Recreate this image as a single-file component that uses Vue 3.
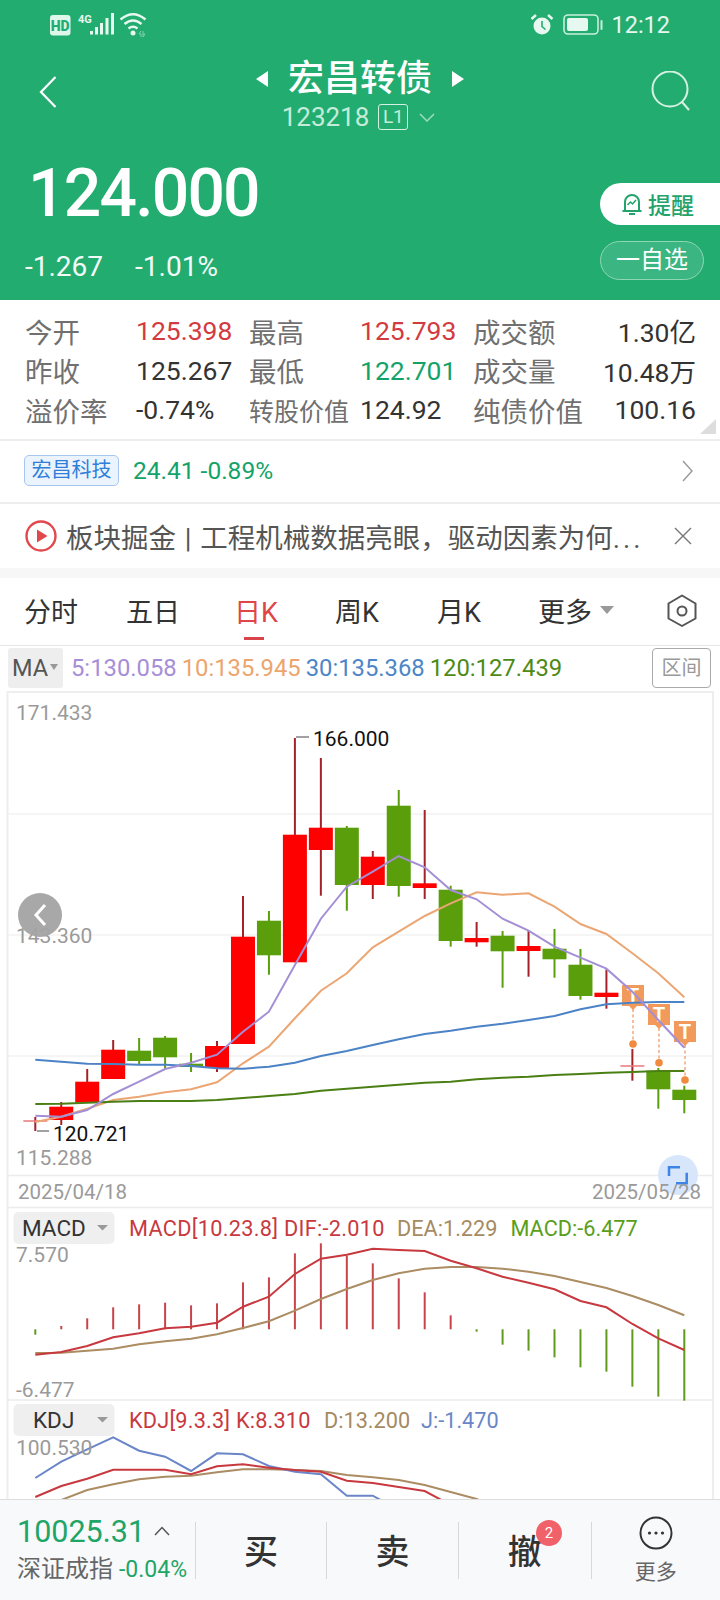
<script setup>
const colX = (i) => 35.3 + i * 25.96
const upper = (v) => 690 + v / 3
const lower = (v) => 1190 + v / 3
const toPoints = (list) => list.map((y, i) => `${colX(i).toFixed(1)},${y.toFixed(1)}`).join(' ')

const quotes = [
  [['今开'], ['125.398', 'red'], ['最高'], ['125.793', 'red'], ['成交额'], ['1.30亿', 'end']],
  [['昨收'], ['125.267'], ['最低'], ['122.701', 'green'], ['成交量'], ['10.48万', 'end']],
  [['溢价率'], ['-0.74%'], ['转股价值', 'tight'], ['124.92'], ['纯债价值'], ['100.16', 'end']],
]

const tabs = ['分时', '五日', '日K', '周K', '月K']

// open/close box, then wick top and bottom, all in page pixels
const candles = [
  [1120, 1122, 1117, 1131, 'doji'],
  [1106.7, 1120, 1102, 1125, 'up'],
  [1081.7, 1102.7, 1069, 1102.7, 'up'],
  [1049.7, 1079, 1040, 1079, 'up'],
  [1050.7, 1061, 1038, 1064, 'down'],
  [1037.7, 1057.3, 1036, 1069, 'down'],
  [1063.7, 1067, 1053, 1072, 'down'],
  [1046, 1068, 1041, 1072, 'up'],
  [936.7, 1044, 896, 1044, 'up'],
  [920.7, 955.3, 911, 974.7, 'down'],
  [834.7, 962.3, 738, 962.3, 'up'],
  [827.7, 850, 758, 895.7, 'up'],
  [827.7, 885, 826, 910.7, 'down'],
  [856.7, 885, 851, 899, 'up'],
  [805.7, 886, 790, 896.7, 'down'],
  [883.3, 888, 810, 899, 'up'],
  [889.7, 941, 885.7, 946.7, 'down'],
  [938, 942.3, 922, 946.7, 'up'],
  [935.7, 951.3, 931, 987.7, 'down'],
  [946, 951, 930.7, 976.7, 'up'],
  [948.7, 959.3, 929, 977.7, 'down'],
  [964.7, 996, 949, 999.7, 'down'],
  [992.7, 997, 969.3, 1008.7, 'up'],
  [1065, 1066.5, 1049, 1080.7, 'doji'],
  [1070.7, 1089.3, 1068, 1108.7, 'down'],
  [1089.7, 1100, 1085.7, 1113.3, 'down'],
].map(([top, bottom, high, low, kind], i) => ({ x: colX(i), top, bottom, high, low, kind }))

const maLines = [
  { color: '#eba673', points: [1296, 1280, 1256, 1230, 1220, 1207, 1198, 1177, 1120, 1070, 985, 902, 850, 772, 725, 678, 640, 607, 614, 610, 650, 702, 732, 790, 850, 922] },
  { color: '#4b83c6', points: [1109, 1115, 1121, 1122, 1124, 1124, 1128, 1135, 1136, 1130, 1118, 1098, 1083, 1065, 1048, 1032, 1022, 1010, 1001, 990, 978, 958, 943, 938, 936, 936] },
  { color: '#4a7f14', points: [1242, 1241, 1238, 1235, 1233, 1233, 1233, 1230, 1224, 1218, 1212, 1202, 1196, 1190, 1184, 1178, 1175, 1168, 1163, 1160, 1155, 1152, 1148, 1146, 1143, 1143] },
  { color: '#a48fd6', points: [1277, 1280, 1260, 1212, 1175, 1137, 1118, 1094, 1025, 965, 825, 686, 590, 545, 498, 532, 600, 628, 686, 722, 770, 803, 836, 905, 990, 1073] },
].map((line) => ({ color: line.color, points: toPoints(line.points.map(upper)) }))

const trades = [
  { x: 633, y: 985, dot: 1044 },
  { x: 659, y: 1004, dot: 1062.7 },
  { x: 685, y: 1021, dot: 1080 },
]

const macdBase = 1329.3
const macdBars = [
  [434, 'down'], [408, 'up'], [385, 'up'], [352, 'up'], [343, 'up'], [338, 'up'], [346, 'up'], [340, 'up'],
  [277, 'up'], [262, 'up'], [190, 'up'], [160, 'up'], [197, 'up'], [220, 'up'], [265, 'up'], [307, 'up'],
  [376, 'up'], [425, 'down'], [464, 'down'], [482, 'down'], [502, 'down'], [532, 'down'], [545, 'down'],
  [590, 'down'], [620, 'down'], [632, 'down'],
].map(([end, kind], i) => ({ x: colX(i), end: lower(end), kind }))

const dif = toPoints([494, 486, 468, 442, 430, 415, 410, 398, 350, 320, 252, 206, 194, 176, 180, 183, 212, 235, 260, 278, 298, 333, 352, 402, 445, 480].map(lower))
const dea = toPoints([489, 488, 482, 476, 463, 454, 446, 433, 414, 394, 362, 327, 297, 270, 250, 236, 231, 231, 236, 245, 258, 276, 294, 318, 345, 376].map(lower))

const kdjJ = toPoints([864, 815, 778, 742, 782, 800, 843, 790, 793, 828, 845, 853, 917, 917, 960, 1000].map(lower))
const kdjK = toPoints([921, 888, 866, 839, 839, 839, 853, 829, 823, 833, 840, 845, 872, 879, 891, 903, 945].map(lower))
const kdjD = toPoints([1000, 930, 900, 883, 868, 860, 857, 847, 838, 838, 840, 843, 855, 862, 870, 885, 906, 927, 960].map(lower))
</script>

<template>
  <div class="page">
    <header class="hero">
      <div class="status">
        <svg class="status-left" width="100" height="30" viewBox="0 0 100 30">
          <rect x="0" y="5" width="20.500" height="20.500" rx="3" fill="#dff6ea" />
          <text x="10.200" y="20.500" text-anchor="middle" class="hd">HD</text>
          <text x="28" y="13" class="net">4G</text>
          <rect x="40" y="21" width="3" height="3.500" fill="#e6f8ef" />
          <rect x="45" y="17" width="3" height="7.500" fill="#e6f8ef" />
          <rect x="50" y="13" width="3" height="11.500" fill="#e6f8ef" />
          <rect x="55.500" y="8" width="3" height="16.500" fill="#e6f8ef" />
          <rect x="61" y="3" width="3" height="21.500" fill="#e6f8ef" />
          <path d="M70.500 9.500 Q83 -1 95.500 9.500 M74.500 14 Q83 7 91.500 14 M78.500 18.500 Q83 15 87.500 18.500" fill="none" stroke="#e6f8ef" stroke-width="2.500" />
          <circle cx="83" cy="23" r="2.500" fill="#e6f8ef" />
          <path d="M91 21 l-2 3 h2 v3 M93 21 v6 l2 -3 h-2" fill="none" stroke="#7fd0a8" stroke-width="1" />
        </svg>
        <div class="status-right">
          <svg width="24" height="24" viewBox="0 0 24 24">
            <circle cx="12" cy="13" r="8.500" fill="#e6f8ef" />
            <path d="M12 8 V13.500 L15.500 16.500" fill="none" stroke="#23ac70" stroke-width="1.600" />
            <path d="M1.500 6 L6 2 M22.500 6 L18 2" stroke="#e6f8ef" stroke-width="2.400" />
          </svg>
          <svg class="battery" width="40" height="22" viewBox="0 0 40 22">
            <rect x="1" y="1" width="34" height="19" rx="4" fill="none" stroke="#c8eedc" stroke-width="1.600" />
            <rect x="4" y="4" width="21" height="13" rx="2" fill="#e6f8ef" />
            <rect x="37.500" y="6" width="2" height="10" rx="1" fill="#c8eedc" />
          </svg>
          <span class="clock">12:12</span>
        </div>
      </div>

      <nav class="nav">
        <div class="nav-side">
          <svg class="back" width="18" height="32" viewBox="0 0 18 32">
            <path d="M16.500 1 L2 16 L16.500 31" fill="none" stroke="#fff" stroke-width="2.200" />
          </svg>
        </div>
        <div class="nav-title">
          <div class="title-row">
            <i class="tri tri-left"></i>
            <span class="title">宏昌转债</span>
            <i class="tri tri-right"></i>
          </div>
          <div class="code-row">
            <span class="code">123218</span>
            <span class="level">L1</span>
            <svg width="16" height="9" viewBox="0 0 16 9">
              <path d="M1 1 L8 8 L15 1" fill="none" stroke="#9bdcbf" stroke-width="1.500" />
            </svg>
          </div>
        </div>
        <div class="nav-side nav-side-right">
          <svg width="40" height="40" viewBox="0 0 40 40">
            <circle cx="19" cy="18" r="17.500" fill="none" stroke="#d5f1e3" stroke-width="2" />
            <path d="M31 31 L38 39" stroke="#d5f1e3" stroke-width="2" />
          </svg>
        </div>
      </nav>

      <div class="price-row">
        <div>
          <div class="price">124.000</div>
          <div class="change"><span>-1.267</span><span>-1.01%</span></div>
        </div>
        <div class="price-actions">
          <div class="remind">
            <svg width="22" height="22" viewBox="0 0 22 22">
              <path d="M4 17 V9 a7 7 0 0 1 14 0 V17 M1.500 18 H20.500 M8 21 H14" fill="none" stroke="#23a36c" stroke-width="2" />
              <path d="M6.500 12 L9.500 9 L11.500 11 L15 7" fill="none" stroke="#23a36c" stroke-width="1.500" />
            </svg>
            <span>提醒</span>
          </div>
          <div class="watch">一自选</div>
        </div>
      </div>
    </header>

    <section class="quotes">
      <template v-for="(row, r) in quotes" :key="r">
        <span v-for="(cell, c) in row" :key="c" :class="['cell', c % 2 ? 'cell-value' : 'cell-label', cell[1]]">{{ cell[0] }}</span>
      </template>
      <i class="corner"></i>
    </section>

    <section class="stock">
      <span class="stock-tag">宏昌科技</span>
      <span class="stock-price">24.41 -0.89%</span>
      <svg class="stock-arrow" width="11" height="22" viewBox="0 0 11 22">
        <path d="M1 1 L10 11 L1 21" fill="none" stroke="#999" stroke-width="1.400" />
      </svg>
    </section>

    <section class="news">
      <svg width="32" height="32" viewBox="0 0 32 32">
        <circle cx="16" cy="16" r="14.500" fill="none" stroke="#e0484e" stroke-width="2.400" />
        <path d="M12 9.500 L22.500 16 L12 22.500 Z" fill="#e0484e" />
      </svg>
      <span class="news-text">板块掘金 | 工程机械数据亮眼，驱动因素为何<span class="news-dots">...</span></span>
      <svg width="18" height="18" viewBox="0 0 18 18">
        <path d="M1 1 L17 17 M17 1 L1 17" stroke="#777" stroke-width="1.400" />
      </svg>
    </section>

    <section class="tabs">
      <span v-for="tab in tabs" :key="tab" :class="['tab', { active: tab === '日K' }]">{{ tab }}</span>
      <span class="tab tab-more">更多<i class="caret caret-big"></i></span>
      <svg class="tab-gear" width="30" height="34" viewBox="0 0 30 34">
        <path d="M15 1.500 L28.500 9.500 V24.500 L15 32 L1.500 24.500 V9.500 Z" fill="none" stroke="#555" stroke-width="2" stroke-linejoin="round" />
        <circle cx="15" cy="17" r="4.500" fill="none" stroke="#555" stroke-width="2" />
      </svg>
    </section>

    <section class="ma">
      <span class="ma-chip">MA<i class="caret"></i></span>
      <span class="ma5">5:130.058</span>
      <span class="ma10">10:135.945</span>
      <span class="ma30">30:135.368</span>
      <span class="ma120">120:127.439</span>
      <span class="range">区间</span>
    </section>

    <svg class="chart" width="720" height="809" viewBox="0 690 720 809">
      <!-- frame and grid -->
      <rect x="7.500" y="692" width="705.500" height="820" fill="none" stroke="#eee" stroke-width="2" />
      <path d="M8 814 H712 M8 935 H712 M8 1056 H712" stroke="#f2f2f2" stroke-width="1.500" />
      <path d="M8 1175.500 H712 M8 1207.500 H712 M8 1400 H712" stroke="#ececec" stroke-width="1.500" />

      <!-- candles -->
      <g v-for="(c, i) in candles" :key="i">
        <line :x1="c.x" :x2="c.x" :y1="c.high" :y2="c.low" :stroke="c.kind === 'down' ? '#5a9e0c' : '#a3222a'" stroke-width="2" />
        <rect v-if="c.kind !== 'doji'" :x="c.x - 12" :y="c.top" width="24" :height="c.bottom - c.top" :fill="c.kind === 'up' ? '#fe0000' : '#5a9e0c'" />
        <line v-else :x1="c.x - 12" :x2="c.x + 12" :y1="c.top + 1" :y2="c.top + 1" stroke="#e9797d" stroke-width="1.500" />
      </g>

      <!-- buy/sell markers -->
      <g v-for="t in trades" :key="t.x">
        <line :x1="t.x" :x2="t.x" :y1="t.y + 24" :y2="t.dot" stroke="#f2a878" stroke-width="1.500" stroke-dasharray="3 2.500" />
        <circle :cx="t.x" :cy="t.dot" r="3.800" fill="#ef8a3e" />
        <path :d="`M${t.x - 11} ${t.y} h22 v21 h-7 l-4 4 l-4 -4 h-7 Z`" fill="#f29a5c" />
        <text :x="t.x" :y="t.y + 18" text-anchor="middle" class="trade-t">T</text>
      </g>

      <polyline v-for="line in maLines" :key="line.color" :points="line.points" fill="none" :stroke="line.color" stroke-width="2" />

      <path d="M296 737 H309 M37 1131 H49" stroke="#444" stroke-width="1.200" />
      <text x="313" y="745.500" class="peak">166.000</text>
      <text x="53" y="1140.500" class="peak">120.721</text>

      <text x="16" y="720" class="axis">171.433</text>
      <text x="16" y="943" class="axis">143.360</text>
      <text x="16" y="1164.500" class="axis">115.288</text>

      <circle cx="40" cy="915" r="22" fill="#a3a3a3" fill-opacity="0.95" />
      <path d="M45 905 L36 915 L45 925" fill="none" stroke="#fff" stroke-width="3" />

      <circle cx="678" cy="1175" r="20" fill="#d8e6fb" />
      <path d="M669 1176 V1167.300 H680 M686.700 1172.700 V1183.300 H676" fill="none" stroke="#3d84e6" stroke-width="2.500" />
      <text x="18" y="1198.500" class="axis date">2025/04/18</text>
      <text x="701" y="1198.500" text-anchor="end" class="axis date">2025/05/28</text>

      <!-- MACD -->
      <rect x="13.500" y="1212" width="101" height="32" rx="5" fill="#efefef" />
      <text x="22" y="1236" class="chip-text">MACD</text>
      <path d="M97 1225 h11 l-5.500 5.500 Z" fill="#999" />
      <text y="1235.500" class="legend">
        <tspan x="129" fill="#c8393f" letter-spacing="0.300">MACD[10.23.8] DIF:-2.010</tspan>
        <tspan x="397" fill="#a58a62">DEA:1.229</tspan>
        <tspan x="510.500" fill="#5a9e1a">MACD:-6.477</tspan>
      </text>
      <text x="16" y="1262" class="axis">7.570</text>
      <text x="16" y="1396.500" class="axis">-6.477</text>
      <line v-for="b in macdBars" :key="b.x" :x1="b.x" :x2="b.x" :y1="macdBase" :y2="b.end" :stroke="b.kind === 'up' ? '#c8444a' : '#5f9a1c'" stroke-width="2" />
      <polyline :points="dea" fill="none" stroke="#ab8c63" stroke-width="2" />
      <polyline :points="dif" fill="none" stroke="#c8393f" stroke-width="2" />

      <!-- KDJ -->
      <rect x="13.500" y="1404" width="101" height="32" rx="5" fill="#efefef" />
      <text x="33" y="1428" class="chip-text">KDJ</text>
      <path d="M97 1417 h11 l-5.500 5.500 Z" fill="#999" />
      <text y="1427.500" class="legend">
        <tspan x="129" fill="#c8393f" letter-spacing="0.200">KDJ[9.3.3] K:8.310</tspan>
        <tspan x="324" fill="#a58a62">D:13.200</tspan>
        <tspan x="421" fill="#6a86c8">J:-1.470</tspan>
      </text>
      <polyline :points="kdjD" fill="none" stroke="#ab8c63" stroke-width="2" />
      <polyline :points="kdjJ" fill="none" stroke="#6a86c8" stroke-width="2" />
      <polyline :points="kdjK" fill="none" stroke="#c8393f" stroke-width="2" />
      <text x="16" y="1454.500" class="axis">100.530</text>
    </svg>

    <footer class="bar">
      <div class="index">
        <div class="index-top">
          <span class="index-value">10025.31</span>
          <svg width="16" height="10" viewBox="0 0 16 10">
            <path d="M1 9 L8 1.500 L15 9" fill="none" stroke="#555" stroke-width="1.500" />
          </svg>
        </div>
        <div class="index-bottom">深证成指 <b>-0.04%</b></div>
      </div>
      <div class="action">买</div>
      <div class="action">卖</div>
      <div class="action">撤<span class="badge">2</span></div>
      <div class="action action-more">
        <svg width="34" height="34" viewBox="0 0 34 34">
          <circle cx="17" cy="17" r="15.500" fill="none" stroke="#333" stroke-width="2" />
          <circle cx="10.500" cy="17" r="1.600" fill="#333" />
          <circle cx="17" cy="17" r="1.600" fill="#333" />
          <circle cx="23.500" cy="17" r="1.600" fill="#333" />
        </svg>
        <span>更多</span>
      </div>
    </footer>
  </div>
</template>

<style scoped>
.page {
  width: 720px;
  height: 1600px;
  overflow: hidden;
  background: #fff;
  color: #333;
  font-family: Roboto, "Noto Sans CJK SC", sans-serif;
}

.hero {
  height: 300px;
  background: #23ac70;
  color: #fff;
}

.status {
  height: 50px;
  display: flex;
  justify-content: space-between;
  align-items: center;
  padding: 0 50px 0 49.5px;
}
.status-left {
  margin-top: -1px;
}
.hd {
  font-size: 14px;
  font-weight: 900;
  fill: #23ac70;
}
.net {
  font-size: 11px;
  font-weight: 700;
  fill: #e6f8ef;
}
.status-right {
  display: flex;
  align-items: center;
  color: #e6f8ef;
}
.battery {
  margin: 0 8px 0 9px;
}
.clock {
  font-size: 23.500px;
}

.nav {
  height: 85px;
  display: flex;
  align-items: flex-start;
}
.nav-side {
  width: 120px;
  padding: 26px 0 0 39px;
  box-sizing: border-box;
}
.nav-side-right {
  display: flex;
  justify-content: flex-end;
  padding: 21px 29px 0 0;
}
.nav-title {
  flex: 1;
  display: flex;
  flex-direction: column;
  align-items: center;
}
.title-row {
  display: flex;
  align-items: center;
  height: 42px;
  margin-top: 8px;
}
.title {
  font-size: 36px;
  line-height: 42px;
  font-weight: 500;
  margin: 0 20px;
}
.tri {
  width: 0;
  height: 0;
  border-top: 8px solid transparent;
  border-bottom: 8px solid transparent;
}
.tri-left {
  border-right: 12px solid #fff;
}
.tri-right {
  border-left: 12px solid #fff;
}
.code-row {
  display: flex;
  align-items: center;
  height: 28px;
  margin-top: 3px;
  color: #c5ecda;
  margin-left: -3px;
}
.code {
  font-size: 26px;
}
.level {
  width: 30px;
  height: 26px;
  margin: 0 11px 0 9px;
  border: 1px solid #d5f1e3;
  border-radius: 3px;
  box-sizing: border-box;
  text-align: center;
  font-size: 19px;
  line-height: 24px;
}

.price-row {
  display: flex;
  justify-content: space-between;
}
.price {
  margin: 24px 0 0 28px;
  font-size: 66px;
  font-weight: 500;
  line-height: 70px;
  letter-spacing: -1.800px;
}
.change {
  display: flex;
  gap: 32px;
  margin: 23px 0 0 25px;
  font-size: 28px;
  line-height: 30px;
  color: #f2fbf7;
}
.price-actions {
  display: flex;
  flex-direction: column;
  align-items: flex-start;
  width: 120px;
  margin-top: 48px;
}
.remind {
  width: 120px;
  height: 42px;
  display: flex;
  align-items: center;
  gap: 5px;
  padding-left: 21px;
  box-sizing: border-box;
  border-radius: 21px 0 0 21px;
  background: #fff;
  color: #23a36c;
  font-size: 23px;
  font-weight: 500;
}
.watch {
  width: 104px;
  height: 39px;
  margin-top: 16px;
  border: 1px solid #8ed7b5;
  border-radius: 20px;
  box-sizing: border-box;
  background: #3bb581;
  text-align: center;
  font-size: 24px;
  line-height: 36px;
}

.quotes {
  position: relative;
  height: 141px;
  box-sizing: border-box;
  padding: 11px 24px 0 25px;
  border-bottom: 2px solid #eee;
  display: grid;
  grid-template-columns: 113px 111px 113px 111px 110px 1fr;
  grid-auto-rows: 39.500px;
  align-items: center;
}
.cell {
  white-space: nowrap;
}
.cell-label {
  font-size: 27.500px;
  color: #707070;
}
.cell-value {
  margin-left: -2px;
  font-size: 26.500px;
  color: #333;
}
.tight {
  font-size: 25px;
}
.red {
  color: #d33a3f;
}
.green {
  color: #13a36a;
}
.end {
  margin-left: 0;
  text-align: right;
}
.corner {
  position: absolute;
  right: 4px;
  bottom: 5px;
  width: 0;
  height: 0;
  border-left: 16px solid transparent;
  border-bottom: 15px solid #ddd;
}

.stock {
  height: 63px;
  box-sizing: border-box;
  border-bottom: 2px solid #eee;
  display: flex;
  align-items: center;
  padding: 0 27px 2px 24px;
}
.stock-tag {
  width: 95px;
  height: 31px;
  border: 1px solid #a6c8ef;
  border-radius: 5px;
  box-sizing: border-box;
  background: #ebf3fd;
  color: #2f7fd9;
  font-size: 20px;
  line-height: 28px;
  text-align: center;
}
.stock-price {
  margin-left: 14px;
  color: #13a36a;
  font-size: 24.500px;
}
.stock-arrow {
  margin-left: auto;
}

.news {
  height: 64px;
  display: flex;
  align-items: center;
  padding: 0 28px 0 25px;
  border-bottom: 10px solid #f7f7f7;
  box-sizing: content-box;
}
.news-text {
  margin-left: 9px;
  width: 608px;
  font-size: 27.500px;
  word-spacing: 2px;
  color: #555;
  white-space: nowrap;
  overflow: hidden;
}
.news-dots {
  letter-spacing: 3px;
}

.tabs {
  position: relative;
  height: 64px;
  border-bottom: 1px solid #e5e5e5;
  display: grid;
  grid-template-columns: 102px 108px 101px 102px 101px 1fr;
  align-items: center;
  padding: 0 0 3px 24px;
  box-sizing: content-box;
}
.tab {
  font-size: 27px;
  color: #333;
}
.active {
  position: relative;
  color: #e0454a;
}
.active::after {
  content: "";
  position: absolute;
  left: 10px;
  top: 46px;
  width: 20px;
  height: 3px;
  background: #d9434a;
}
.tab-more {
  display: flex;
  align-items: center;
}
.tab-gear {
  position: absolute;
  right: 23px;
  top: 16px;
}
.caret {
  display: inline-block;
  width: 0;
  height: 0;
  margin-left: 2px;
  border-left: 4.500px solid transparent;
  border-right: 4.500px solid transparent;
  border-top: 6px solid #999;
  vertical-align: 6px;
}
.caret-big {
  margin-left: 8px;
  border-left-width: 7px;
  border-right-width: 7px;
  border-top-width: 8px;
}

.ma {
  height: 44px;
  display: flex;
  align-items: center;
  padding: 0 9px 0 8px;
  font-size: 23.800px;
}
.ma-chip {
  width: 55px;
  height: 40px;
  margin-right: 8px;
  padding-left: 4px;
  box-sizing: border-box;
  border-radius: 3px;
  background: #eee;
  color: #555;
  font-size: 23.500px;
  line-height: 40px;
  white-space: nowrap;
}
.ma5 {
  color: #a68ed8;
}
.ma10 {
  margin-left: 5px;
  color: #eca56c;
}
.ma30 {
  margin-left: 5px;
  color: #4c86c8;
}
.ma120 {
  margin-left: 5px;
  color: #4d8a16;
}
.range {
  width: 59px;
  height: 40px;
  margin-left: auto;
  border: 1px solid #aaa;
  border-radius: 4px;
  box-sizing: border-box;
  color: #999;
  font-size: 20px;
  line-height: 38px;
  text-align: center;
}

.chart {
  display: block;
}
.axis {
  font-size: 21px;
  fill: #9a9a9a;
}
.date {
  font-size: 20.500px;
}
.peak {
  font-size: 21px;
  fill: #111;
}
.trade-t {
  font-size: 20px;
  font-weight: 700;
  fill: #fff;
}
.chip-text {
  font-size: 22.500px;
  fill: #333;
}
.legend {
  font-size: 21.700px;
}

.bar {
  position: relative;
  height: 101px;
  box-sizing: border-box;
  border-top: 1px solid #ddd;
  background: #f8f9fb;
  display: grid;
  grid-template-columns: 196px 131px 132px 132.500px 1fr;
  padding-top: 22px;
}
.index {
  padding-left: 17px;
  border-right: 1px solid #d8d8d8;
  height: 57px;
  white-space: nowrap;
}
.index-top {
  display: flex;
  align-items: center;
  gap: 9px;
  height: 30px;
  margin-top: -6px;
}
.index-value {
  font-size: 30.500px;
  color: #1fa568;
}
.index-bottom {
  margin-top: 8px;
  font-size: 24px;
  line-height: 30px;
  color: #666;
}
.index-bottom b {
  font-weight: 400;
  font-size: 23px;
  color: #1fa568;
}
.action {
  position: relative;
  height: 57px;
  border-right: 1px solid #d8d8d8;
  font-size: 34px;
  font-weight: 500;
  line-height: 60px;
  text-align: center;
  color: #333;
}
.badge {
  position: absolute;
  left: 77px;
  top: -2px;
  width: 26px;
  height: 26px;
  border-radius: 50%;
  background: #f0616a;
  color: #fff;
  font-size: 15px;
  font-weight: 400;
  line-height: 26px;
}
.action-more {
  display: flex;
  flex-direction: column;
  align-items: center;
  height: auto;
  border-right: 0;
  margin-top: -6px;
  font-size: 21px;
  font-weight: 400;
  line-height: 30px;
  color: #666;
}
.action-more svg {
  flex: none;
}
.action-more span {
  flex: none;
  margin-top: 7px;
}
</style>

<style>
body {
  margin: 0;
  background: #fff;
}
</style>
